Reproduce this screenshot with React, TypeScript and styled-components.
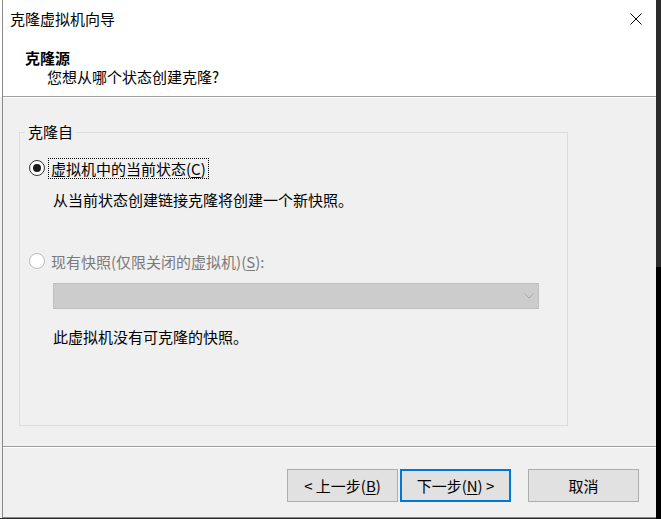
import React from 'react';
import styled, { createGlobalStyle } from 'styled-components';

const GlobalStyle = createGlobalStyle`
  html, body {
    margin: 0;
    padding: 0;
  }
  body {
    width: 661px;
    height: 519px;
    overflow: hidden;
    background: #2b2b2b;
    font-family: "Noto Sans CJK SC", "Microsoft YaHei UI", sans-serif;
    font-size: 15px;
    color: #000;
  }
`;

const Screen = styled.div`
  display: flex;
  width: 661px;
  height: 519px;
  background: #2b2b2b;
`;

const BehindStrip = styled.div`
  flex: none;
  width: 2px;
  height: 518px;
  background: linear-gradient(to bottom, #fff 0, #fff 97px, #f0f0f0 97px);
`;

const DarkStrip = styled.div`
  flex: none;
  width: 5px;
  background: linear-gradient(to bottom, #2b2b2b 0, #2b2b2b 267px, #000 267px);
`;

const Window = styled.div`
  flex: none;
  width: 653px;
  height: 517px;
  border-left: 1px solid #888;
  border-bottom: 1px solid #888;
  background: #f0f0f0;
  display: flex;
  flex-direction: column;
`;

const TitleBar = styled.div`
  height: 38px;
  flex: none;
  background: #fff;
  display: flex;
  align-items: center;
  justify-content: space-between;
  padding-left: 7px;
`;

const TitleText = styled.span`
  line-height: 20px;
  margin-top: -1px;
`;

const CloseButton = styled.div`
  width: 40px;
  height: 38px;
  display: flex;
  align-items: center;
  justify-content: center;
`;

const Header = styled.div`
  height: 58px;
  flex: none;
  background: #fff;
  display: flex;
  flex-direction: column;
  padding-left: 22px;
  box-sizing: border-box;
  padding-top: 10px;
`;

const HeaderTitle = styled.div`
  font-weight: bold;
  line-height: 20px;
`;

const HeaderSub = styled.div`
  line-height: 18px;
  padding-left: 22px;
`;

const Rule = styled.div`
  flex: none;
  height: 0;
  border-top: 1px solid #a0a0a0;
  border-bottom: 1px solid #fff;
`;

const Content = styled.div`
  height: 348px;
  flex: none;
  box-sizing: border-box;
  padding: 25px 0 0 16px;
`;

const GroupBox = styled.fieldset`
  margin: 0;
  padding: 0;
  min-width: 0;
  width: 549px;
  height: 303px;
  box-sizing: border-box;
  border: 1px solid #dcdcdc;
  display: flex;
  flex-direction: column;
`;

const Legend = styled.legend`
  padding: 0 3px;
  margin-left: 5px;
  line-height: 18px;
`;

const OptionRow = styled.div<{ $top: number }>`
  display: flex;
  align-items: center;
  height: 20px;
  margin-top: ${p => p.$top}px;
  padding-left: 9px;
`;

const Radio = styled.span<{ $checked?: boolean; $disabled?: boolean }>`
  flex: none;
  width: 16px;
  height: 16px;
  box-sizing: border-box;
  border-radius: 50%;
  border: 1px solid ${p => (p.$disabled ? '#bcbcbc' : '#333')};
  background: #fff;
  display: flex;
  align-items: center;
  justify-content: center;
  &::after {
    content: '';
    display: ${p => (p.$checked ? 'block' : 'none')};
    width: 8px;
    height: 8px;
    border-radius: 50%;
    background: #1a1a1a;
  }
`;

const OptionLabel = styled.span<{ $focused?: boolean; $disabled?: boolean }>`
  margin-left: 3px;
  padding: 0 2px;
  line-height: 19px;
  border: 1px dotted ${p => (p.$focused ? '#000' : 'transparent')};
  color: ${p => (p.$disabled ? '#7a7a7a' : '#000')};
  white-space: nowrap;
`;

const Key = styled.u`
  text-underline-offset: 2px;
`;

const Note = styled.div<{ $top: number }>`
  margin-top: ${p => p.$top}px;
  padding-left: 33px;
  line-height: 20px;
`;

const Combo = styled.div`
  margin: 12px 0 0 33px;
  width: 486px;
  height: 26px;
  box-sizing: border-box;
  background: #cccccc;
  border: 1px solid #bfbfbf;
  display: flex;
  align-items: center;
  justify-content: flex-end;
  padding-right: 4px;
`;

const Footer = styled.div`
  flex: 1;
  display: flex;
  justify-content: flex-end;
  align-items: flex-start;
  padding: 21px 17px 0 0;
`;

const Button = styled.div<{ $default?: boolean; $gap?: number }>`
  width: 111px;
  height: 33px;
  box-sizing: border-box;
  margin-left: ${p => p.$gap ?? 0}px;
  background: #e1e1e1;
  border: ${p => (p.$default ? '2px solid #0078d7' : '1px solid #adadad')};
  display: flex;
  align-items: center;
  justify-content: center;
  line-height: 20px;
  white-space: nowrap;
`;

export default function App() {
  return (
    <Screen>
      <GlobalStyle />
      <BehindStrip />
      <Window>
        <TitleBar>
          <TitleText>克隆虚拟机向导</TitleText>
          <CloseButton>
            <svg width="12" height="12" viewBox="0 0 12 12">
              <path d="M0.5 0.5 L11.5 11.5 M11.5 0.5 L0.5 11.5" stroke="#000" strokeWidth="1" fill="none" />
            </svg>
          </CloseButton>
        </TitleBar>
        <Header>
          <HeaderTitle>克隆源</HeaderTitle>
          <HeaderSub>您想从哪个状态创建克隆?</HeaderSub>
        </Header>
        <Rule />
        <Content>
          <GroupBox>
            <Legend>克隆自</Legend>
            <OptionRow $top={17}>
              <Radio $checked />
              <OptionLabel $focused>
                虚拟机中的当前状态(<Key>C</Key>)
              </OptionLabel>
            </OptionRow>
            <Note $top={12}>从当前状态创建链接克隆将创建一个新快照。</Note>
            <OptionRow $top={41}>
              <Radio $disabled />
              <OptionLabel $disabled>
                现有快照(仅限关闭的虚拟机)(<Key>S</Key>):
              </OptionLabel>
            </OptionRow>
            <Combo>
              <svg width="10" height="6" viewBox="0 0 10 6">
                <polyline points="0.5,0.5 5,5 9.5,0.5" stroke="#a8a8a8" strokeWidth="1" fill="none" />
              </svg>
            </Combo>
            <Note $top={18}>此虚拟机没有可克隆的快照。</Note>
          </GroupBox>
        </Content>
        <Rule />
        <Footer>
          <Button>
            &lt; 上一步(<Key>B</Key>)
          </Button>
          <Button $default $gap={2}>
            下一步(<Key>N</Key>) &gt;
          </Button>
          <Button $gap={17}>取消</Button>
        </Footer>
      </Window>
      <DarkStrip />
    </Screen>
  );
}
